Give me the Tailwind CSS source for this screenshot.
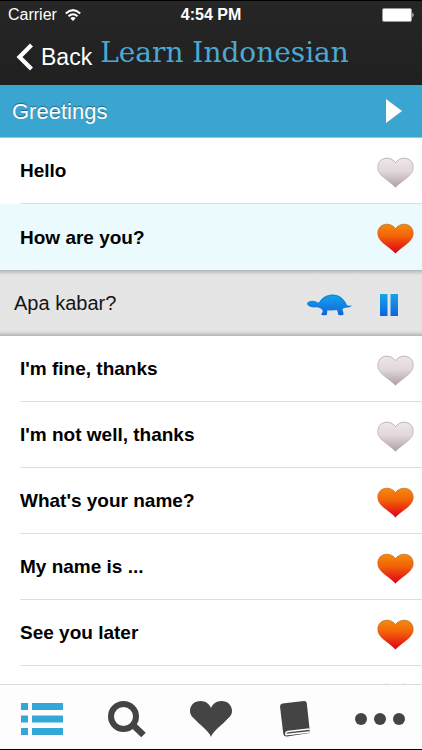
<!DOCTYPE html>
<html lang="en">
<head>
<meta charset="utf-8">
<meta name="viewport" content="width=device-width, initial-scale=1">
<title>Learn Indonesian</title>
<script src="https://cdn.jsdelivr.net/npm/@tailwindcss/browser@4"></script>
</head>
<body class="bg-white font-['Liberation_Sans',Arial,sans-serif] text-black">
<svg class="absolute size-0" aria-hidden="true">
  <defs>
    <linearGradient id="on" x1="0" y1="0" x2="0" y2="1"><stop offset="0" stop-color="#f58a0c"/><stop offset=".4" stop-color="#f26408"/><stop offset=".8" stop-color="#e61e14"/><stop offset="1" stop-color="#d8001c"/></linearGradient>
    <linearGradient id="off" x1="0" y1="0" x2="0" y2="1"><stop offset="0" stop-color="#eee6e8"/><stop offset=".45" stop-color="#e2d7da"/><stop offset="1" stop-color="#ab9fa2"/></linearGradient>
    <linearGradient id="rim-on" x1="0" y1="0" x2="0" y2="1"><stop offset="0" stop-color="#b0641c" stop-opacity=".7"/><stop offset=".7" stop-color="#d02010" stop-opacity=".2"/></linearGradient>
    <linearGradient id="rim-off" x1="0" y1="0" x2="0" y2="1"><stop offset="0" stop-color="#a09496" stop-opacity=".7"/><stop offset="1" stop-color="#a09496" stop-opacity=".3"/></linearGradient>
    <linearGradient id="blue" x1="0" y1="0" x2="0" y2="1"><stop offset="0" stop-color="#12a4ec"/><stop offset="1" stop-color="#0a62dc"/></linearGradient>
    <filter id="grain"><feTurbulence type="fractalNoise" baseFrequency=".45" numOctaves="2"/><feColorMatrix type="saturate" values="0"/></filter>
    <path id="heart" d="M19 31C17 28 11.500 24.500 6.500 20.300C2.500 16.800 .8 13.800 .8 10C.8 4.800 4.700 .8 9.900 .8C13.800 .8 17 2.600 19 5.300C21 2.600 24.200 .8 28.100 .8C33.300 .8 37.200 4.800 37.200 10C37.200 13.800 35.500 16.800 31.500 20.300C26.500 24.500 21 28 19 31Z"/>
    <symbol id="heart-on" viewBox="0 0 38 32"><use href="#heart" fill="url(#on)" stroke="url(#rim-on)"/></symbol>
    <symbol id="heart-off" viewBox="0 0 38 32"><use href="#heart" fill="url(#off)" stroke="url(#rim-off)"/></symbol>
  </defs>
</svg>
<div class="flex h-screen flex-col border-y border-black">
  <header class="shrink-0 bg-linear-to-b from-[#262626] to-[#202020] text-white">
    <div class="grid h-7 grid-cols-3 items-center pr-2 pl-2 text-base">
      <div class="flex items-center gap-2"><span>Carrier</span>
        <svg class="h-3 w-4" viewBox="0 0 16 12" role="img" aria-label="Wi-Fi"><g fill="none" stroke="#fff" stroke-width="2"><path d="M.8 4.500Q8-2.200 15.200 4.500M3.500 7.300Q8 3.200 12.500 7.300"/></g><path d="M5.300 9.200Q8 7 10.700 9.200L8 12Z" fill="#fff"/></svg>
      </div>
      <time class="text-center font-bold">4:54 PM</time>
      <svg class="h-[14px] w-8 justify-self-end" viewBox="0 0 32 14" role="img" aria-label="Battery full"><rect x=".5" y=".5" width="29" height="13" rx="1.500" fill="#fff" stroke="#999"/><path d="M30.500 4.500Q32.500 7 30.500 9.500Z" fill="#fff"/></svg>
    </div>
    <div class="flex h-14 items-start gap-2 pl-4">
      <button type="button" class="flex h-14 items-center gap-2 text-[23px]">
        <svg class="h-7 w-[17px]" viewBox="0 0 17 28" aria-hidden="true"><path d="M15.500 2L3.500 14L15.500 26" fill="none" stroke="#fff" stroke-width="4.200"/></svg>
        <span>Back</span>
      </button>
      <h1 class="pt-1 font-['DejaVu_Serif',serif] text-[28px] leading-10 whitespace-nowrap text-[#4ba9d3]">Learn Indonesian</h1>
    </div>
  </header>
  <section class="flex h-[53px] shrink-0 items-center justify-between border-b border-[#8bcbe5] bg-[#3aa5d1] pr-5 pl-3 text-white">
    <h2 class="text-[22px] [text-shadow:0_-1px_1px_#25647f]">Greetings</h2>
    <button type="button" aria-label="Play all"><svg class="h-6 w-4" viewBox="0 0 16 24" aria-hidden="true"><path d="M0 0L16 12L0 24Z" fill="#fff"/></svg></button>
  </section>
  <main class="min-h-0 flex-1 overflow-hidden">
    <ul>
      <li class="pl-5"><div class="flex h-[66px] items-center justify-between border-b border-[#dedede] pr-2"><span class="pt-0.5 text-[19px] font-bold">Hello</span><button type="button" class="mt-1" aria-label="Favourite Hello"><svg class="h-8 w-[37px]"><use href="#heart-off"/></svg></button></div></li>
      <li class="bg-[#ebfafc]">
        <div class="flex h-[66px] items-center justify-between pr-2 pl-5"><span class="pt-0.5 text-[19px] font-bold">How are you?</span><button type="button" class="mt-1" aria-label="Unfavourite How are you?"><svg class="h-8 w-[37px]"><use href="#heart-on"/></svg></button></div>
        <div class="relative flex h-[66px] items-center justify-between border-y border-[#b5b9ba] bg-[#e6e6e6] pr-6 pl-[14px] shadow-[inset_0_5px_3px_-3px_#c0c0c0,inset_0_-5px_3px_-3px_#c0c0c0]">
          <svg class="absolute inset-0 size-full opacity-5" aria-hidden="true"><rect width="100%" height="100%" filter="url(#grain)"/></svg>
          <span class="text-[20px] text-[#111]">Apa kabar?</span>
          <div class="flex items-center gap-7">
            <button type="button" aria-label="Play slowly"><svg class="mt-1 h-[22px] w-[45px]" viewBox="0 0 45 22" aria-hidden="true"><path fill="url(#blue)" d="M0 9.500C.8 7.200 4 6.400 7 7.100C9.500 7.500 10.300 8.700 12 8.400C15 3.200 20 .6 26 .6C33 .6 37.500 5.500 40 11.300C41.500 12 43.500 11.900 45 11C44 13.300 41 13.800 38.500 13.700C36.800 14.200 35.800 14.600 35.500 15.300C35.600 17.200 36.800 18.700 36.500 20.500C36.200 21.500 31.500 21.500 31 20.500C31.200 18.500 30.500 17.300 29.800 16C26.500 16.600 23 16.600 20.500 16.200C20 17.500 20.300 19 19.800 20.700C18.500 21.700 14.800 21.500 14.200 20.600C14.300 19 16.200 18.700 15.700 16.800C15.500 15 12.500 13.900 10 13.300C7.500 13.500 3.500 13.700 1.500 11.800C.6 11.200 0 10.400 0 9.500Z"/><path d="M13 8.300C17 3.200 21 1.400 26 1.400C31.500 1.400 36 4.800 38.200 9.500" fill="none" stroke="#0d72b8" stroke-opacity=".6"/></svg></button>
            <button type="button" aria-label="Pause"><svg class="mt-1 h-[22px] w-[18px]" viewBox="0 0 18 22" aria-hidden="true"><path d="M0 0H7.500V22H0ZM10.500 0H18V22H10.500Z" fill="url(#blue)"/></svg></button>
          </div>
        </div>
      </li>
      <li class="pl-5"><div class="flex h-[66px] items-center justify-between border-b border-[#dedede] pr-2"><span class="pt-0.5 text-[19px] font-bold">I'm fine, thanks</span><button type="button" class="mt-1" aria-label="Favourite I'm fine, thanks"><svg class="h-8 w-[37px]"><use href="#heart-off"/></svg></button></div></li>
      <li class="pl-5"><div class="flex h-[66px] items-center justify-between border-b border-[#dedede] pr-2"><span class="pt-0.5 text-[19px] font-bold">I'm not well, thanks</span><button type="button" class="mt-1" aria-label="Favourite I'm not well, thanks"><svg class="h-8 w-[37px]"><use href="#heart-off"/></svg></button></div></li>
      <li class="pl-5"><div class="flex h-[66px] items-center justify-between border-b border-[#dedede] pr-2"><span class="pt-0.5 text-[19px] font-bold">What's your name?</span><button type="button" class="mt-1" aria-label="Unfavourite What's your name?"><svg class="h-8 w-[37px]"><use href="#heart-on"/></svg></button></div></li>
      <li class="pl-5"><div class="flex h-[66px] items-center justify-between border-b border-[#dedede] pr-2"><span class="pt-0.5 text-[19px] font-bold">My name is ...</span><button type="button" class="mt-1" aria-label="Unfavourite My name is ..."><svg class="h-8 w-[37px]"><use href="#heart-on"/></svg></button></div></li>
      <li class="pl-5"><div class="flex h-[66px] items-center justify-between border-b border-[#dedede] pr-2"><span class="pt-0.5 text-[19px] font-bold">See you later</span><button type="button" class="mt-1" aria-label="Unfavourite See you later"><svg class="h-8 w-[37px]"><use href="#heart-on"/></svg></button></div></li>
      <li class="pl-5"><div class="flex h-[66px] items-center justify-end pr-2"><button type="button" aria-label="Favourite"><svg class="h-8 w-[37px]"><use href="#heart-off"/></svg></button></div></li>
    </ul>
  </main>
  <nav class="grid h-[65px] shrink-0 grid-cols-5 border-t border-[#dcdcdc] bg-[#fdfdfd] text-[#444]" aria-label="Main">
    <a href="#list" aria-label="Phrases" class="flex items-center justify-center pt-1 text-[#35a6d8]"><svg class="h-8 w-[42px]" viewBox="0 0 42 32" fill="currentColor" aria-hidden="true"><path d="M0 0H7V7H0ZM11 0H42V7H11ZM0 12.500H7V19.500H0ZM11 12.500H42V19.500H11ZM0 25H7V32H0ZM11 25H42V32H11Z"/></svg></a>
    <a href="#search" aria-label="Search" class="flex items-center justify-center pt-1"><svg class="h-[37px] w-[38px]" viewBox="0 0 38 37" fill="none" stroke="currentColor" aria-hidden="true"><circle cx="15.500" cy="15.500" r="12.500" stroke-width="6"/><path d="M24.500 23.500L35.500 34" stroke-width="6.500"/></svg></a>
    <a href="#favourites" aria-label="Favourites" class="flex items-center justify-center pt-1"><svg class="h-9 w-[42px]" viewBox="0 0 42 36" fill="currentColor" aria-hidden="true"><path d="M21 36C19.500 31 12 25.500 7 20.500C3 16.500 0 14.500 0 10C0 4 4.500 0 10.500 0C15.500 0 19.500 2.800 21 7C22.500 2.800 26.500 0 31.500 0C37.500 0 42 4 42 10C42 14.500 39 16.500 35 20.500C30 25.500 22.500 31 21 36Z"/></svg></a>
    <a href="#dictionary" aria-label="Dictionary" class="flex items-center justify-center pt-1"><svg class="h-9 w-[30px]" viewBox="0 0 30 36" aria-hidden="true"><path fill="currentColor" d="M2.500 2.600L24 .1Q26.500 0 26.800 2.300L29.500 27.500V32L7 35.500Q4 35.800 3.300 33L0 5.500Q0 3 2.500 2.600Z"/><path d="M29.500 28L8 30.500Q5 31.200 6 33.600L29.500 31" fill="none" stroke="#fff" stroke-width="1.500"/></svg></a>
    <a href="#more" aria-label="More" class="flex items-center justify-center pt-1"><svg class="h-3 w-[50px]" viewBox="0 0 50 12" fill="currentColor" aria-hidden="true"><circle cx="6" cy="6" r="6"/><circle cx="25" cy="6" r="6"/><circle cx="44" cy="6" r="6"/></svg></a>
  </nav>
</div>
</body>
</html>
